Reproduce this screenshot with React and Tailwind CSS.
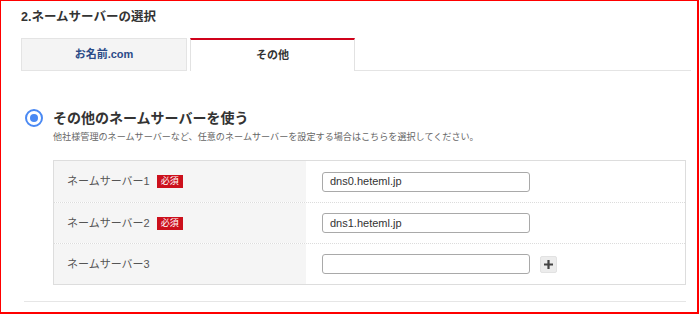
import React from "react";

const jp = { fontFamily: '"Liberation Sans", "Noto Sans CJK JP", sans-serif' };

function Badge() {
  return (
    <span className="ml-[7px] inline-flex h-[13px] w-[26px] items-center justify-center bg-[#cc101c] text-[9px] leading-none text-white">
      必須
    </span>
  );
}

function Row({ label, required, value, plus, first }) {
  return (
    <div
      className={
        "flex h-[41px] " +
        (first ? "" : "border-t border-dotted border-[#dcdcdc]")
      }
    >
      <div className="flex w-[252px] items-center bg-[#f5f5f5] pl-[13px] text-[11px] text-[#555]">
        <span>{label}</span>
        {required && <Badge />}
      </div>
      <div className="flex flex-1 items-center gap-[10px] pl-[16px]">
        <div className="flex h-[20px] w-[208px] items-center rounded-[3px] border border-[#a9a9a9] bg-white px-[7px] text-[11px] text-[#333]">
          {value}
        </div>
        {plus && (
          <div className="flex h-[17px] w-[17px] items-center justify-center rounded-[2px] border border-[#e2e2e2] bg-[#ececec]">
            <svg width="11" height="11" viewBox="0 0 11 11">
              <path d="M5.5 1v9M1 5.5h9" stroke="#444" strokeWidth="2.2" />
            </svg>
          </div>
        )}
      </div>
    </div>
  );
}

export default function App() {
  return (
    <div
      className="h-[314px] w-[699px] border-l border-t border-r-2 border-b-2 border-[#ff0000] bg-white"
      style={jp}
    >
      <div className="ml-[20px] pt-[8px] text-[12.5px] font-bold leading-[16px] text-[#333]">
        2.ネームサーバーの選択
      </div>

      <div className="ml-[20px] mt-[13px] flex h-[33px]">
        <div className="flex w-[166px] items-center justify-center border border-[#e4e4e4] bg-[#f4f4f4] text-[11px] font-bold text-[#2b4b88]">
          お名前.com
        </div>
        <div className="ml-[3px] flex w-[165px] items-center justify-center border-t-2 border-x border-t-[#d0021b] border-x-[#e2e2e2] bg-white text-[11px] font-bold text-[#333]">
          その他
        </div>
        <div className="w-[336px] border-b border-[#e4e4e4]" />
      </div>

      <div className="ml-[24px] mt-[37px] flex items-center gap-[10px]">
        <div className="flex h-[18px] w-[18px] items-center justify-center rounded-full border-[2.5px] border-[#4a89f3] bg-white">
          <div className="h-[8px] w-[8px] rounded-full bg-[#4a89f3]" />
        </div>
        <div className="text-[14px] font-bold leading-[20px] text-[#333]">
          その他のネームサーバーを使う
        </div>
      </div>
      <div className="ml-[52px] mt-[2px] text-[9.1px] leading-[14px] text-[#666]">
        他社様管理のネームサーバーなど、任意のネームサーバーを設定する場合はこちらを選択してください。
      </div>

      <div className="ml-[52px] mt-[16px] w-[633px] border border-[#dddddd]">
        <Row first label="ネームサーバー1" required value="dns0.heteml.jp" />
        <Row label="ネームサーバー2" required value="dns1.heteml.jp" />
        <Row label="ネームサーバー3" value="" plus />
      </div>

      <div className="ml-[23px] mt-[16px] h-px w-[662px] bg-[#e6e6e6]" />
    </div>
  );
}
